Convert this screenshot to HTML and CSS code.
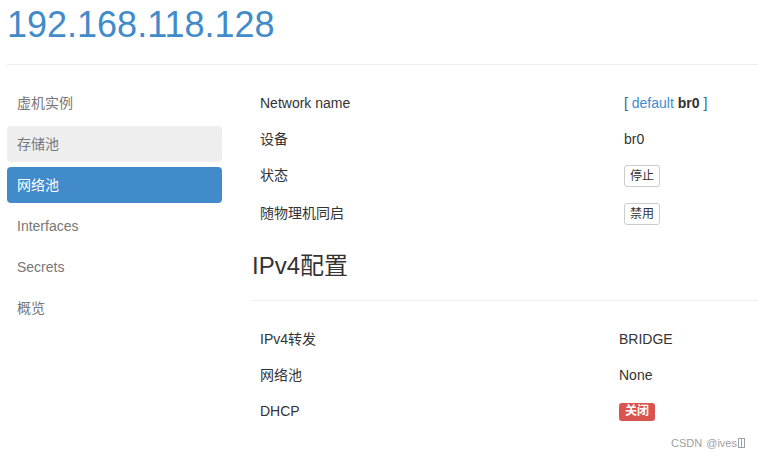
FILE: index.html
```html
<!DOCTYPE html>
<html lang="zh-CN">
<head>
<meta charset="utf-8">
<title>192.168.118.128</title>
<link rel="stylesheet" href="styles.css">
</head>
<body>
<div class="page">
  <h1 class="title">192.168.118.128</h1>
  <div class="main">
    <ul class="side">
      <li><a>虚机实例</a></li>
      <li><a class="hover">存储池</a></li>
      <li><a class="active">网络池</a></li>
      <li><a>Interfaces</a></li>
      <li><a>Secrets</a></li>
      <li><a>概览</a></li>
    </ul>
    <div class="content">
      <table class="info info-a">
        <tr><td class="k">Network name</td><td><span class="br">[</span> <span class="lnk">default</span> <b>br0</b> <span class="br">]</span></td></tr>
        <tr><td class="k">设备</td><td>br0</td></tr>
        <tr><td class="k">状态</td><td><span class="btn">停止</span></td></tr>
        <tr><td class="k">随物理机同启</td><td><span class="btn">禁用</span></td></tr>
      </table>
      <h3 class="sub">IPv4配置</h3>
      <table class="info info-b">
        <tr><td class="k">IPv4转发</td><td>BRIDGE</td></tr>
        <tr><td class="k">网络池</td><td>None</td></tr>
        <tr><td class="k">DHCP</td><td><span class="badge">关闭</span></td></tr>
      </table>
    </div>
  </div>
  <div class="mark">CSDN @ives<span class="tofu"></span></div>
</div>
</body>
</html>
```
FILE: styles.css
```css
* { box-sizing: border-box; }
html, body { margin: 0; padding: 0; background: #fff; }
body {
  font-family: "Liberation Sans", Arial, "Noto Sans CJK SC", sans-serif;
  font-size: 14px;
  line-height: 20px;
  color: #333;
}
.page { position: relative; height: 458px; overflow: hidden; }
.title {
  margin: 0 0 0 7px;
  padding: 5px 0 19px 0;
  font-size: 36px;
  line-height: 40px;
  font-weight: 400;
  color: #428bca;
  border-bottom: 1px solid #eee;
}
.main {
  display: flex;
  margin: 20px 0 0 7px;
  gap: 30px;
}
.side {
  list-style: none;
  margin: 0;
  padding: 0;
  width: 215px;
  flex: none;
}
.side li + li { margin-top: 5px; }
.side a {
  display: block;
  padding: 8px 10px;
  line-height: 20px;
  color: #777;
  border-radius: 4px;
}
.side a.hover { background: #eee; }
.side a.active { background: #428bca; color: #fff; }
.content { flex: 1; }
.info { border-collapse: collapse; width: 100%; }
.info td { padding: 8px; vertical-align: top; line-height: 20px; }
.info-a td.k { width: 364px; }
.info-b td.k { width: 359px; }
.lnk { color: #428bca; }
.br { color: #2a6496; }
.btn {
  display: inline-block;
  vertical-align: top;
  padding: 1px 5px;
  font-size: 12px;
  line-height: 18px;
  border: 1px solid #ccc;
  border-radius: 3px;
  background: #fff;
  color: #333;
}
.sub {
  margin: 20px 0 0 0;
  padding: 0 0 21px 0;
  font-size: 24px;
  line-height: 26px;
  font-weight: 400;
  color: #333;
  border-bottom: 1px solid #eee;
}
.info-b { margin-top: 20px; }
.badge {
  display: inline-block;
  vertical-align: top;
  margin-top: 2px;
  padding: 1px 6px 2px;
  font-size: 12px;
  line-height: 15px;
  font-weight: 700;
  color: #fff;
  background: #d9534f;
  border-radius: 3px;
}
.mark {
  position: absolute;
  left: 671px;
  top: 437px;
  font-size: 11px;
  line-height: 13px;
  color: #a0a0a0;
  white-space: nowrap;
  word-spacing: 1px;
}
.tofu {
  display: inline-block;
  width: 7px;
  height: 10px;
  border: 1px solid #a0a0a0;
  margin-left: 1px;
  vertical-align: -1px;
  background: linear-gradient(#a0a0a0, #a0a0a0) center / 1px 100% no-repeat;
}
```
